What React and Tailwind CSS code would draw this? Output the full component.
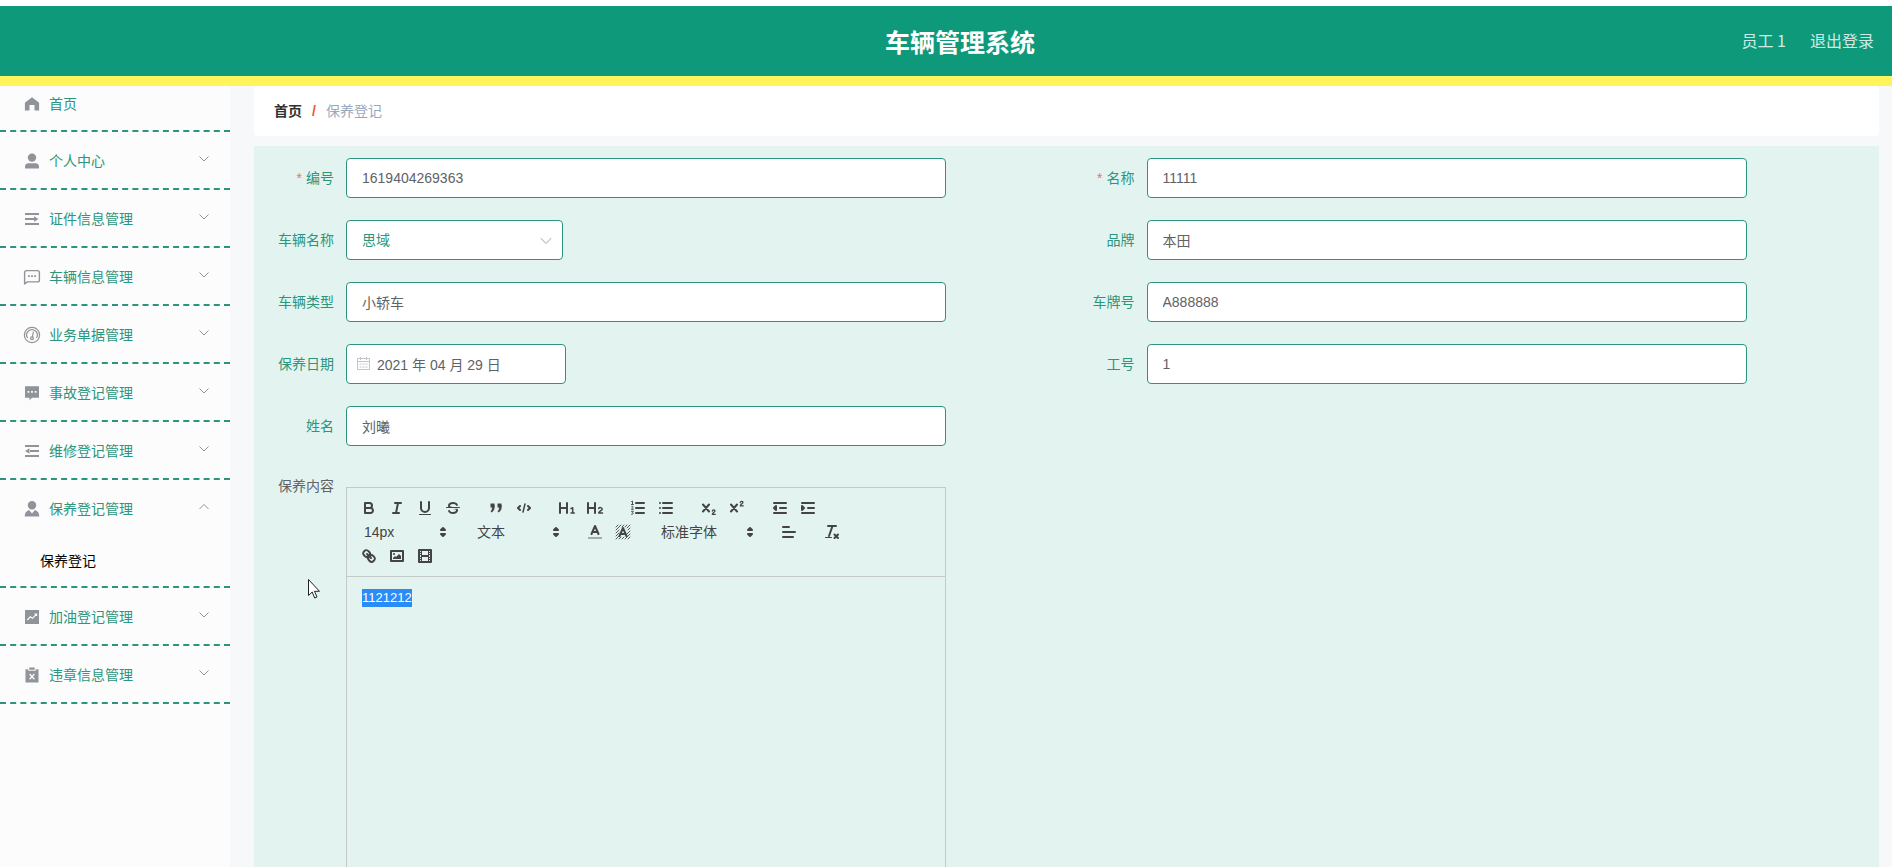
import { useState } from 'react';

const menuItems = [
  { id: 'profile', label: '个人中心', icon: 'userSolid' },
  { id: 'license', label: '证件信息管理', icon: 'unfold' },
  { id: 'vehicle', label: '车辆信息管理', icon: 'chatLine' },
  { id: 'business', label: '业务单据管理', icon: 'odometer' },
  { id: 'accident', label: '事故登记管理', icon: 'chatSolid' },
  { id: 'repair', label: '维修登记管理', icon: 'fold' },
  { id: 'maintain', label: '保养登记管理', icon: 'custom', children: ['保养登记'] },
  { id: 'fuel', label: '加油登记管理', icon: 'marketing' },
  { id: 'violation', label: '违章信息管理', icon: 'release' },
];

const menuIcons = {
  home: (
    <path
      fill="currentColor"
      d="M9 2.2 2.2 7.6c-.2.2-.3.4-.3.7v7.2h4.6V10h5v5.5h4.6V8.3c0-.3-.1-.5-.3-.7z"
    />
  ),
  userSolid: (
    <g fill="currentColor">
      <circle cx="9" cy="5.6" r="4.2" />
      <path d="M2 16.5v-1.8c0-2 1.4-3.4 3.4-3.4h7.2c2 0 3.4 1.4 3.4 3.4v1.8z" />
    </g>
  ),
  custom: (
    <g fill="currentColor">
      <circle cx="9" cy="5.3" r="4.2" />
      <path d="M1.7 16.5c0-3.200 1.600-5.700 4.400-6.500L9 13.500l2.900-3.500c2.800.8 4.400 3.300 4.400 6.500z" />
    </g>
  ),
  unfold: (
    <path fill="currentColor" d="M2 3h14v2H2zM2 8h9v2H2zM2 13h14v2H2zM11 6.300 15.500 9 11 11.700z" />
  ),
  fold: (
    <path fill="currentColor" d="M2 3h14v2H2zM7 8h9v2H7zM2 13h14v2H2zM6.500 6.300 2 9l4.500 2.700z" />
  ),
  chatLine: (
    <g>
      <path
        fill="none"
        stroke="currentColor"
        strokeWidth="1.4"
        strokeLinejoin="round"
        d="M3.600 2.600h10.800a2 2 0 0 1 2 2v7.300a2 2 0 0 1-2 2H4.400l-2.800 2V4.600a2 2 0 0 1 2-2z"
      />
      <path fill="currentColor" d="M5 7.200h1.800V9H5zM8.100 7.200h1.800V9H8.100zM11.200 7.200H13V9h-1.800z" />
    </g>
  ),
  chatSolid: (
    <g>
      <path fill="currentColor" d="M2 2.300h14v11.500H9l-2.500 2.700v-2.700H2z" />
      <path fill="#fcfcfc" d="M4.500 7h1.800v1.800H4.500zM8.100 7h1.800v1.800H8.100zM11.700 7h1.800v1.800h-1.800z" />
    </g>
  ),
  odometer: (
    <g fill="none" stroke="currentColor" strokeWidth="1.2">
      <circle cx="9" cy="9" r="7.6" />
      <path d="M4.600 12A5.300 5.300 0 1 1 13.400 12" />
      <path d="M9.400 11 10.300 6" strokeLinecap="round" />
      <circle cx="9" cy="12.3" r="1.4" />
    </g>
  ),
  marketing: (
    <g>
      <path fill="currentColor" d="M2 2h14v14H2z" />
      <path fill="none" stroke="#fcfcfc" strokeWidth="1.2" d="m4.300 12 3-3.200 2.200 1.500 3.800-4M11.600 6.100h2v2" />
    </g>
  ),
  release: (
    <g>
      <path fill="currentColor" d="M2.500 3.200h2.700v1.600h7.600V3.200h2.700v13.300h-13zM6.300 1.500h5.400v2.300H6.300z" />
      <path fill="none" stroke="#fcfcfc" strokeWidth="1.3" d="m6.600 8 4.800 5.200M11.400 8l-4.800 5.200" />
    </g>
  ),
};

function MenuIcon({ name }) {
  return (
    <span className="mr-[5px] flex w-6 shrink-0 justify-center text-[#909399]">
      <svg viewBox="0 0 18 18" className="size-[18px]" aria-hidden="true">
        {menuIcons[name]}
      </svg>
    </span>
  );
}

function Chevron({ up, className }) {
  return (
    <svg viewBox="0 0 12 12" className={className} aria-hidden="true">
      <path
        d={up ? 'M1.5 8 6 3.5 10.5 8' : 'M1.5 3.5 6 8l4.5-4.5'}
        fill="none"
        stroke="currentColor"
        strokeWidth="1"
      />
    </svg>
  );
}

function Sidebar() {
  const [openId, setOpenId] = useState('maintain');

  return (
    <nav className="w-[230px] shrink-0 bg-[#fcfcfc] text-sm text-[#2b957d]">
      <a href="#home" className="flex h-[46px] items-center border-b-2 border-dashed border-[#2b957d] pb-2 pl-5">
        <MenuIcon name="home" />
        首页
      </a>
      {menuItems.map((item) => {
        const open = item.id === openId;
        return (
          <div key={item.id} className="border-b-2 border-dashed border-[#2b957d]">
            <button
              type="button"
              aria-expanded={open}
              onClick={() => setOpenId(open ? null : item.id)}
              className="flex h-14 w-full items-center px-5 pt-0.5"
            >
              <MenuIcon name={item.icon} />
              <span className="flex-1 text-left">{item.label}</span>
              <Chevron up={open} className="mb-1 size-3 text-[#909399]" />
            </button>
            {open &&
              item.children?.map((child) => (
                <a key={child} href="#maintain" className="flex h-[50px] items-center pl-10 text-black">
                  {child}
                </a>
              ))}
          </div>
        );
      })}
    </nav>
  );
}

function Field({ id, label, required, children }) {
  return (
    <div className="flex h-10">
      <label htmlFor={id} className="w-20 shrink-0 pr-3 text-right leading-10 text-[#2b957d]">
        {required && <span className="mr-1 text-[#f56c6c]">*</span>}
        {label}
      </label>
      {children}
    </div>
  );
}

function TextField({ id, label, value, required }) {
  return (
    <Field id={id} label={label} required={required}>
      <input
        id={id}
        type="text"
        defaultValue={value}
        className="h-10 w-full max-w-[600px] rounded border border-[#2b957d] bg-white px-[15px] text-[#606266] outline-none"
      />
    </Field>
  );
}

/* Toolbar glyphs on an 18x18 grid */
const stroke = { fill: 'none', stroke: 'currentColor', strokeWidth: 2, strokeLinecap: 'round', strokeLinejoin: 'round' };
const thin = { ...stroke, strokeWidth: 1 };

const toolIcons = {
  bold: (
    <g {...stroke}>
      <path d="M5,4H9.5A2.5,2.5,0,0,1,12,6.5v0A2.5,2.5,0,0,1,9.5,9H5A0,0,0,0,1,5,9V4A0,0,0,0,1,5,4Z" />
      <path d="M5,9h5.5A2.5,2.5,0,0,1,13,11.5v0A2.5,2.5,0,0,1,10.5,14H5a0,0,0,0,1,0,0V9A0,0,0,0,1,5,9Z" />
    </g>
  ),
  italic: <path {...stroke} d="M7 4h6M5 14h6M8 14l2-10" />,
  underline: (
    <g>
      <path {...stroke} d="M5,3V9a4.012,4.012,0,0,0,4,4H9a4.012,4.012,0,0,0,4-4V3" />
      <rect fill="currentColor" height="1" rx="0.5" ry="0.5" width="12" x="3" y="15" />
    </g>
  ),
  strike: (
    <g>
      <path {...thin} d="M15.5 8.5h-13" />
      <path
        fill="currentColor"
        d="M9.007,8C6.542,7.791,6,7.519,6,6.5,6,5.792,7.283,5,9,5c1.571,0,2.765.679,2.969,1.309a1,1,0,0,0,1.9-.617C13.356,4.106,11.354,3,9,3,6.2,3,4,4.538,4,6.5a3.2,3.2,0,0,0,.5,1.843Z"
      />
      <path
        fill="currentColor"
        d="M8.984,10C11.457,10.208,12,10.479,12,11.5c0,0.708-1.283,1.5-3,1.5-1.571,0-2.765-.679-2.969-1.309a1,1,0,1,0-1.9.617C4.644,13.894,6.646,15,9,15c2.8,0,5-1.538,5-3.5a3.2,3.2,0,0,0-.5-1.843Z"
      />
    </g>
  ),
  blockquote: (
    <g fill="currentColor" stroke="currentColor">
      <rect height="3" width="3" x="4" y="5" />
      <rect height="3" width="3" x="11" y="5" />
      <path d="M7 6v3c0 2-1 3.500-3 4 1-1.500 1.500-3 1.500-5zM14 6v3c0 2-1 3.500-3 4 1-1.500 1.500-3 1.500-5z" />
    </g>
  ),
  code: (
    <g {...stroke}>
      <path d="M5 7 3 9l2 2M13 7l2 2-2 2" />
      <path strokeWidth="1.5" d="m10 5-2 8" />
    </g>
  ),
  h1: (
    <g>
      <path {...stroke} d="M2 4v10M9 4v10M2 9h7" />
      <path {...stroke} strokeWidth="1.5" d="m13 9.700 1.700-1V14M13 14h3.300" />
    </g>
  ),
  h2: (
    <g>
      <path {...stroke} d="M2 4v10M9 4v10M2 9h7" />
      <path {...stroke} strokeWidth="1.5" d="M12.700 9.500c.6-1.300 3.500-1.200 3.500.5 0 1.400-3.500 2.500-3.500 4h3.800" />
    </g>
  ),
  listOrdered: (
    <g>
      <path {...stroke} d="M7 4h8M7 9h8M7 14h8" />
      <path
        {...thin}
        strokeWidth="0.9"
        d="M2.500 2.500 3.500 2v3.500M2.400 5.500h2M2.500 7.600c.5-.6 1.800-.3 1.500.6L2.500 10.300h2M2.500 12.300h1.800l-1 1.300c1.600.1 1.300 2-.8 1.700"
      />
    </g>
  ),
  listBullet: <path {...stroke} d="M6 4h9M6 9h9M6 14h9M3 4h0M3 9h0M3 14h0" />,
  sub: (
    <g>
      <path {...stroke} d="m3 5.500 6 7M9 5.500l-6 7" />
      <path {...thin} strokeWidth="1.3" d="M12.300 12c.3-1.500 2.900-1.300 2.600.2-.2 1-2.600 2-2.600 3.100h3" />
    </g>
  ),
  sup: (
    <g>
      <path {...stroke} d="m3 5.500 6 7M9 5.500l-6 7" />
      <path {...thin} strokeWidth="1.3" d="M12.300 3.500c.3-1.500 2.900-1.300 2.600.2-.2 1-2.600 2-2.600 3.100h3" />
    </g>
  ),
  outdent: (
    <g>
      <path {...stroke} d="M3 14h12M3 4h12M9 9h6" />
      <path {...stroke} fill="currentColor" d="M5 7v4L3 9z" />
    </g>
  ),
  indent: (
    <g>
      <path {...stroke} d="M3 14h12M3 4h12M9 9h6" />
      <path {...stroke} fill="currentColor" d="M3 7v4l2-2z" />
    </g>
  ),
  color: (
    <g>
      <path stroke="currentColor" strokeWidth="2" strokeOpacity="0.4" d="M2 15h14" />
      <path {...stroke} d="M5.5 11 9 3l3.5 8M11.6 9H6.4" />
    </g>
  ),
  background: (
    <g>
      <path
        {...thin}
        strokeWidth="0.9"
        d="M2 4l2-2M2 7l5-5M2 10l3-3M8 4l2-2M2 13l3-3M11 4l2-2M2 16l3-3M13 5l3-3M5 16l2-2M14 7l2-2M8 16l2-2M13 11l3-3M11 16l5-5M14 16l2-2"
      />
      <path {...stroke} d="M5.5 13 9 5l3.5 8M11.6 11H6.4" />
    </g>
  ),
  align: <path {...stroke} d="M3 9h12M3 14h10M3 4h6" transform="translate(0 0)" />,
  clean: (
    <g>
      <path {...stroke} d="M5 3h8M6 13 9.5 3M11.5 11.5l3.5 3.5M15 11.5 11.5 15" />
      <rect fill="currentColor" height="1" rx="0.5" ry="0.5" width="7" x="2" y="14" />
    </g>
  ),
  link: (
    <g {...stroke}>
      <path d="M7 7l4 4" />
      <path d="M8.9,4.577a3.476,3.476,0,0,1,.36,4.679A3.476,3.476,0,0,1,4.577,8.9C3.185,7.5,2.035,6.4,4.217,4.217S7.5,3.185,8.9,4.577Z" />
      <path d="M13.423,9.1a3.476,3.476,0,0,0-4.679-.36,3.476,3.476,0,0,0,.36,4.679c1.392,1.392,2.5,2.542,4.679.36S14.815,10.5,13.423,9.1Z" />
    </g>
  ),
  image: (
    <g>
      <rect {...stroke} height="10" width="12" x="3" y="4" />
      <circle fill="currentColor" cx="6" cy="7" r="1" />
      <path fill="currentColor" d="M5 12v-1l2-2 1 1 3-3 2 2v3z" />
    </g>
  ),
  video: (
    <g>
      <rect {...stroke} height="12" width="12" x="3" y="3" />
      <path
        fill="currentColor"
        d="M5 3h1v12H5zM12 3h1v12h-1zM5 8h8v2H5zM3 5h3v1H3zM3 7h3v1H3zM3 10h3v1H3zM3 12h3v1H3zM12 5h3v1h-3zM12 7h3v1h-3zM12 10h3v1h-3zM12 12h3v1h-3z"
      />
    </g>
  ),
};

function ToolGroup({ tools }) {
  return (
    <div className="mr-[15px] flex">
      {tools.map((tool) => (
        <button key={tool} type="button" aria-label={tool} className="flex h-6 w-7 items-center justify-center">
          <svg viewBox="0 0 18 18" className="size-[18px]">
            {toolIcons[tool]}
          </svg>
        </button>
      ))}
    </div>
  );
}

function ToolSelect({ name, value, wide }) {
  return (
    <div className={`relative mr-[15px] h-6 ${wide ? 'w-[108px]' : 'w-[98px]'}`}>
      <select aria-label={name} className="h-6 w-full appearance-none bg-transparent pl-[9px] text-sm leading-6 outline-none">
        <option>{value}</option>
      </select>
      <svg viewBox="0 0 18 18" className="pointer-events-none absolute top-[3px] right-px size-[18px]">
        <path {...stroke} fill="currentColor" d="M7 11l2 2 2-2zM7 7l2-2 2 2z" />
      </svg>
    </div>
  );
}

function Editor() {
  return (
    <div className="mt-[19px] w-full max-w-[600px] border border-[#c4cac8] text-[#444]">
      <div className="flex flex-wrap border-b border-[#c4cac8] p-2">
        <ToolGroup tools={['bold', 'italic', 'underline', 'strike']} />
        <ToolGroup tools={['blockquote', 'code']} />
        <ToolGroup tools={['h1', 'h2']} />
        <ToolGroup tools={['listOrdered', 'listBullet']} />
        <ToolGroup tools={['sub', 'sup']} />
        <ToolGroup tools={['outdent', 'indent']} />
        <ToolSelect name="字号" value="14px" />
        <ToolSelect name="标题" value="文本" />
        <ToolGroup tools={['color', 'background']} />
        <ToolSelect name="字体" value="标准字体" wide />
        <ToolGroup tools={['align']} />
        <ToolGroup tools={['clean']} />
        <ToolGroup tools={['link', 'image', 'video']} />
      </div>
      <div
        role="textbox"
        aria-label="保养内容"
        contentEditable
        suppressContentEditableWarning
        className="min-h-[400px] px-[15px] py-3 text-[13px] leading-[18px] outline-none"
      >
        <span className="inline-block bg-[#2b8cf7] text-white">1121212</span>
      </div>
    </div>
  );
}

export default function App() {
  return (
    <div className="flex h-screen flex-col overflow-hidden bg-[#f6f8fa] font-['Liberation_Sans','Noto_Sans_CJK_SC',sans-serif] text-sm">
      {/* Header */}
      <header className="grid shrink-0 grid-cols-[1fr_auto_1fr] items-center border-t-6 border-b-10 border-t-white border-b-[#fff45c] bg-[#0f997b] font-['Noto_Sans_CJK_SC',sans-serif]">
        <h1 className="col-start-2 pl-7 text-[25px] leading-[70px] font-bold text-white">车辆管理系统</h1>
        <div className="flex justify-end gap-6 pr-[18px] pb-0.5 text-base text-[#cdebe3]">
          <span>员工 1</span>
          <button type="button">退出登录</button>
        </div>
      </header>

      <div className="flex min-h-0 flex-1">
        <Sidebar />

        <main className="mr-[13px] ml-6 min-w-0 flex-1">
          {/* Breadcrumb */}
          <div className="mb-[10px] flex h-[50px] items-center rounded bg-white px-5">
            <a href="#home" className="font-bold text-[#303133]">
              首页
            </a>
            <span className="mx-[10px] font-bold text-[#f0562b]">/</span>
            <span className="text-[#97a8be]">保养登记</span>
          </div>

          {/* Form */}
          <form className="flex flex-col bg-[#e3f4f0] p-3">
            <div className="grid grid-cols-2 gap-y-[22px]">
              <TextField id="code" label="编号" value="1619404269363" required />
              <TextField id="name" label="名称" value="11111" required />

              <Field id="vehicle" label="车辆名称">
                <div className="relative w-[217px]">
                  <select
                    id="vehicle"
                    className="h-10 w-full appearance-none rounded border border-[#2b957d] bg-white px-[15px] text-[#2b957d] outline-none"
                  >
                    <option>思域</option>
                  </select>
                  <Chevron className="pointer-events-none absolute top-[14px] right-[10px] size-[14px] text-[#c0c4cc]" />
                </div>
              </Field>
              <TextField id="brand" label="品牌" value="本田" />

              <TextField id="type" label="车辆类型" value="小轿车" />
              <TextField id="plate" label="车牌号" value="A888888" />

              <Field id="date" label="保养日期">
                <div className="relative w-[220px]">
                  <input
                    id="date"
                    type="text"
                    defaultValue="2021 年 04 月 29 日"
                    className="h-10 w-full rounded border border-[#2b957d] bg-white pr-3 pl-[30px] text-[#606266] outline-none"
                  />
                  <svg
                    viewBox="0 0 14 14"
                    className="pointer-events-none absolute top-[13px] left-[11px] size-[14px] text-[#c0c4cc]"
                    fill="none"
                    stroke="currentColor"
                  >
                    <path d="M.5 1.5h12v11H.5zM.5 4.5h12M3.5 0v3M9.5 0v3" />
                    <path d="M2.5 7h2M5.5 7h2M8.5 7h2M2.5 10h2M5.5 10h2M8.5 10h2" />
                  </svg>
                </div>
              </Field>
              <TextField id="staff" label="工号" value="1" />

              <TextField id="owner" label="姓名" value="刘曦" />

              <div className="col-start-1 flex">
                <span className="w-20 shrink-0 pr-3 text-right leading-9 text-[#606266]">保养内容</span>
                <Editor />
              </div>
            </div>
          </form>
        </main>
      </div>

      {/* Mouse pointer */}
      <svg viewBox="0 0 12 20" className="pointer-events-none absolute top-[579px] left-[308px] h-5 w-3">
        <path d="M.5.5v16l3.7-3.5 2.5 6 2.3-1-2.5-5.700h5z" fill="#fff" stroke="#222" strokeLinejoin="round" />
      </svg>
    </div>
  );
}
